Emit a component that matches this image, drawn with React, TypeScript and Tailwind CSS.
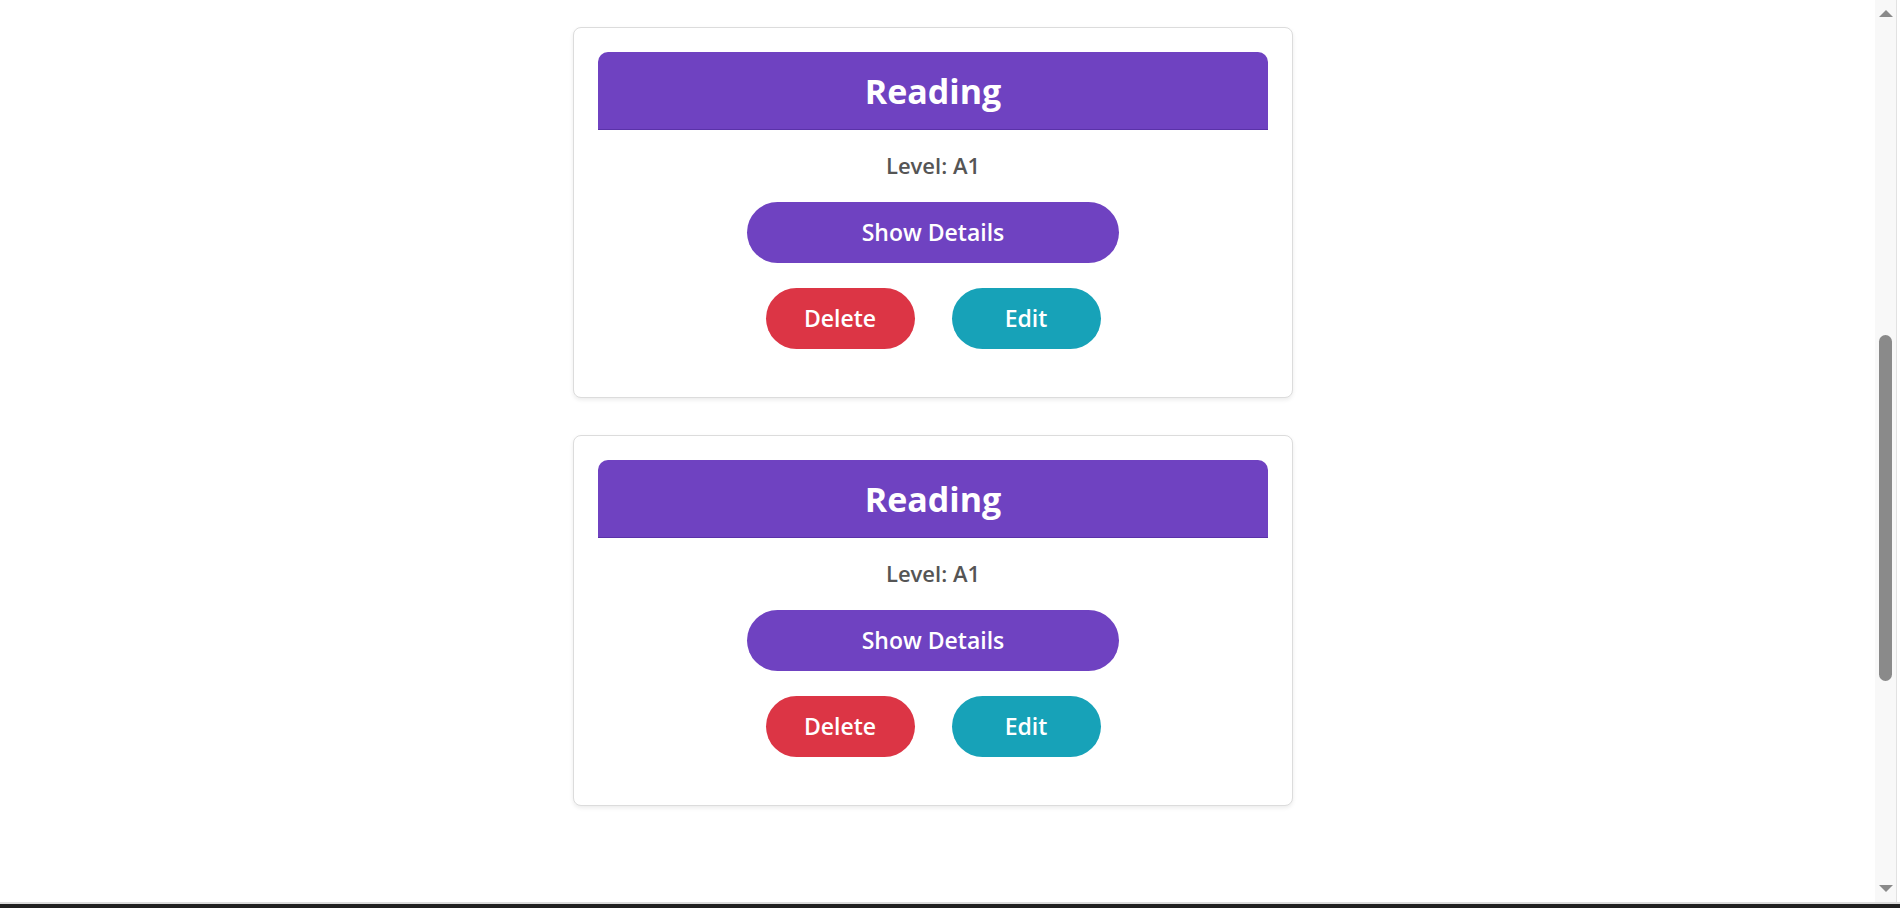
import React from "react";

function Card() {
  return (
    <div className="w-[720px] mx-auto rounded-[8px] border border-[#dcdcdc] bg-white shadow-[0_2px_4px_rgba(0,0,0,0.08)] px-6 pt-[24px] pb-[48px] flex flex-col items-center">
      <div className="w-full h-[78px] rounded-t-[10px] bg-[#6f42c1] border-b border-[#5a32a8] flex items-center justify-center">
        <h2 className="text-white text-[34px] font-bold leading-none">Reading</h2>
      </div>
      <p className="mt-[21px] h-[28px] leading-[28px] text-[22px] font-semibold text-[#555]">Level: A1</p>
      <button className="mt-[23px] w-[372px] h-[61px] rounded-full bg-[#6f42c1] text-white text-[23px] font-semibold">
        Show Details
      </button>
      <div className="mt-[25px] flex gap-[37px]">
        <button className="w-[149px] h-[61px] rounded-full bg-[#dc3545] text-white text-[23px] font-semibold">
          Delete
        </button>
        <button className="w-[149px] h-[61px] rounded-full bg-[#17a2b8] text-white text-[23px] font-semibold">
          Edit
        </button>
      </div>
    </div>
  );
}

export default function App() {
  return (
    <div
      className="w-full h-[908px] overflow-hidden flex flex-col bg-white"
      style={{ fontFamily: '"Open Sans", "Noto Sans", sans-serif' }}
    >
      <div className="flex-1 flex min-h-0">
        <div className="w-[1866px] pt-[27px] flex flex-col gap-[37px]">
          <Card />
          <Card />
        </div>
        <div className="flex-1 flex">
          <div className="w-[9px]" />
          <div className="w-[21px] bg-[#f8f8f8] flex flex-col items-center pt-[10px] pb-[10px]">
            <div className="w-0 h-0 border-l-[7px] border-r-[7px] border-b-[7px] border-l-transparent border-r-transparent border-b-[#8a8a8a]" />
            <div className="h-[318px]" />
            <div className="w-[13px] h-[346px] rounded-full bg-[#8a8a8a]" />
            <div className="flex-1" />
            <div className="w-0 h-0 border-l-[7px] border-r-[7px] border-t-[7px] border-l-transparent border-r-transparent border-t-[#8a8a8a]" />
          </div>
          <div className="flex-1 border-l border-[#e2e2e2] bg-white" />
        </div>
      </div>
      <div className="h-[2px] bg-[#dcdcdc]" />
      <div className="h-[4px] bg-[#202020]" />
    </div>
  );
}
